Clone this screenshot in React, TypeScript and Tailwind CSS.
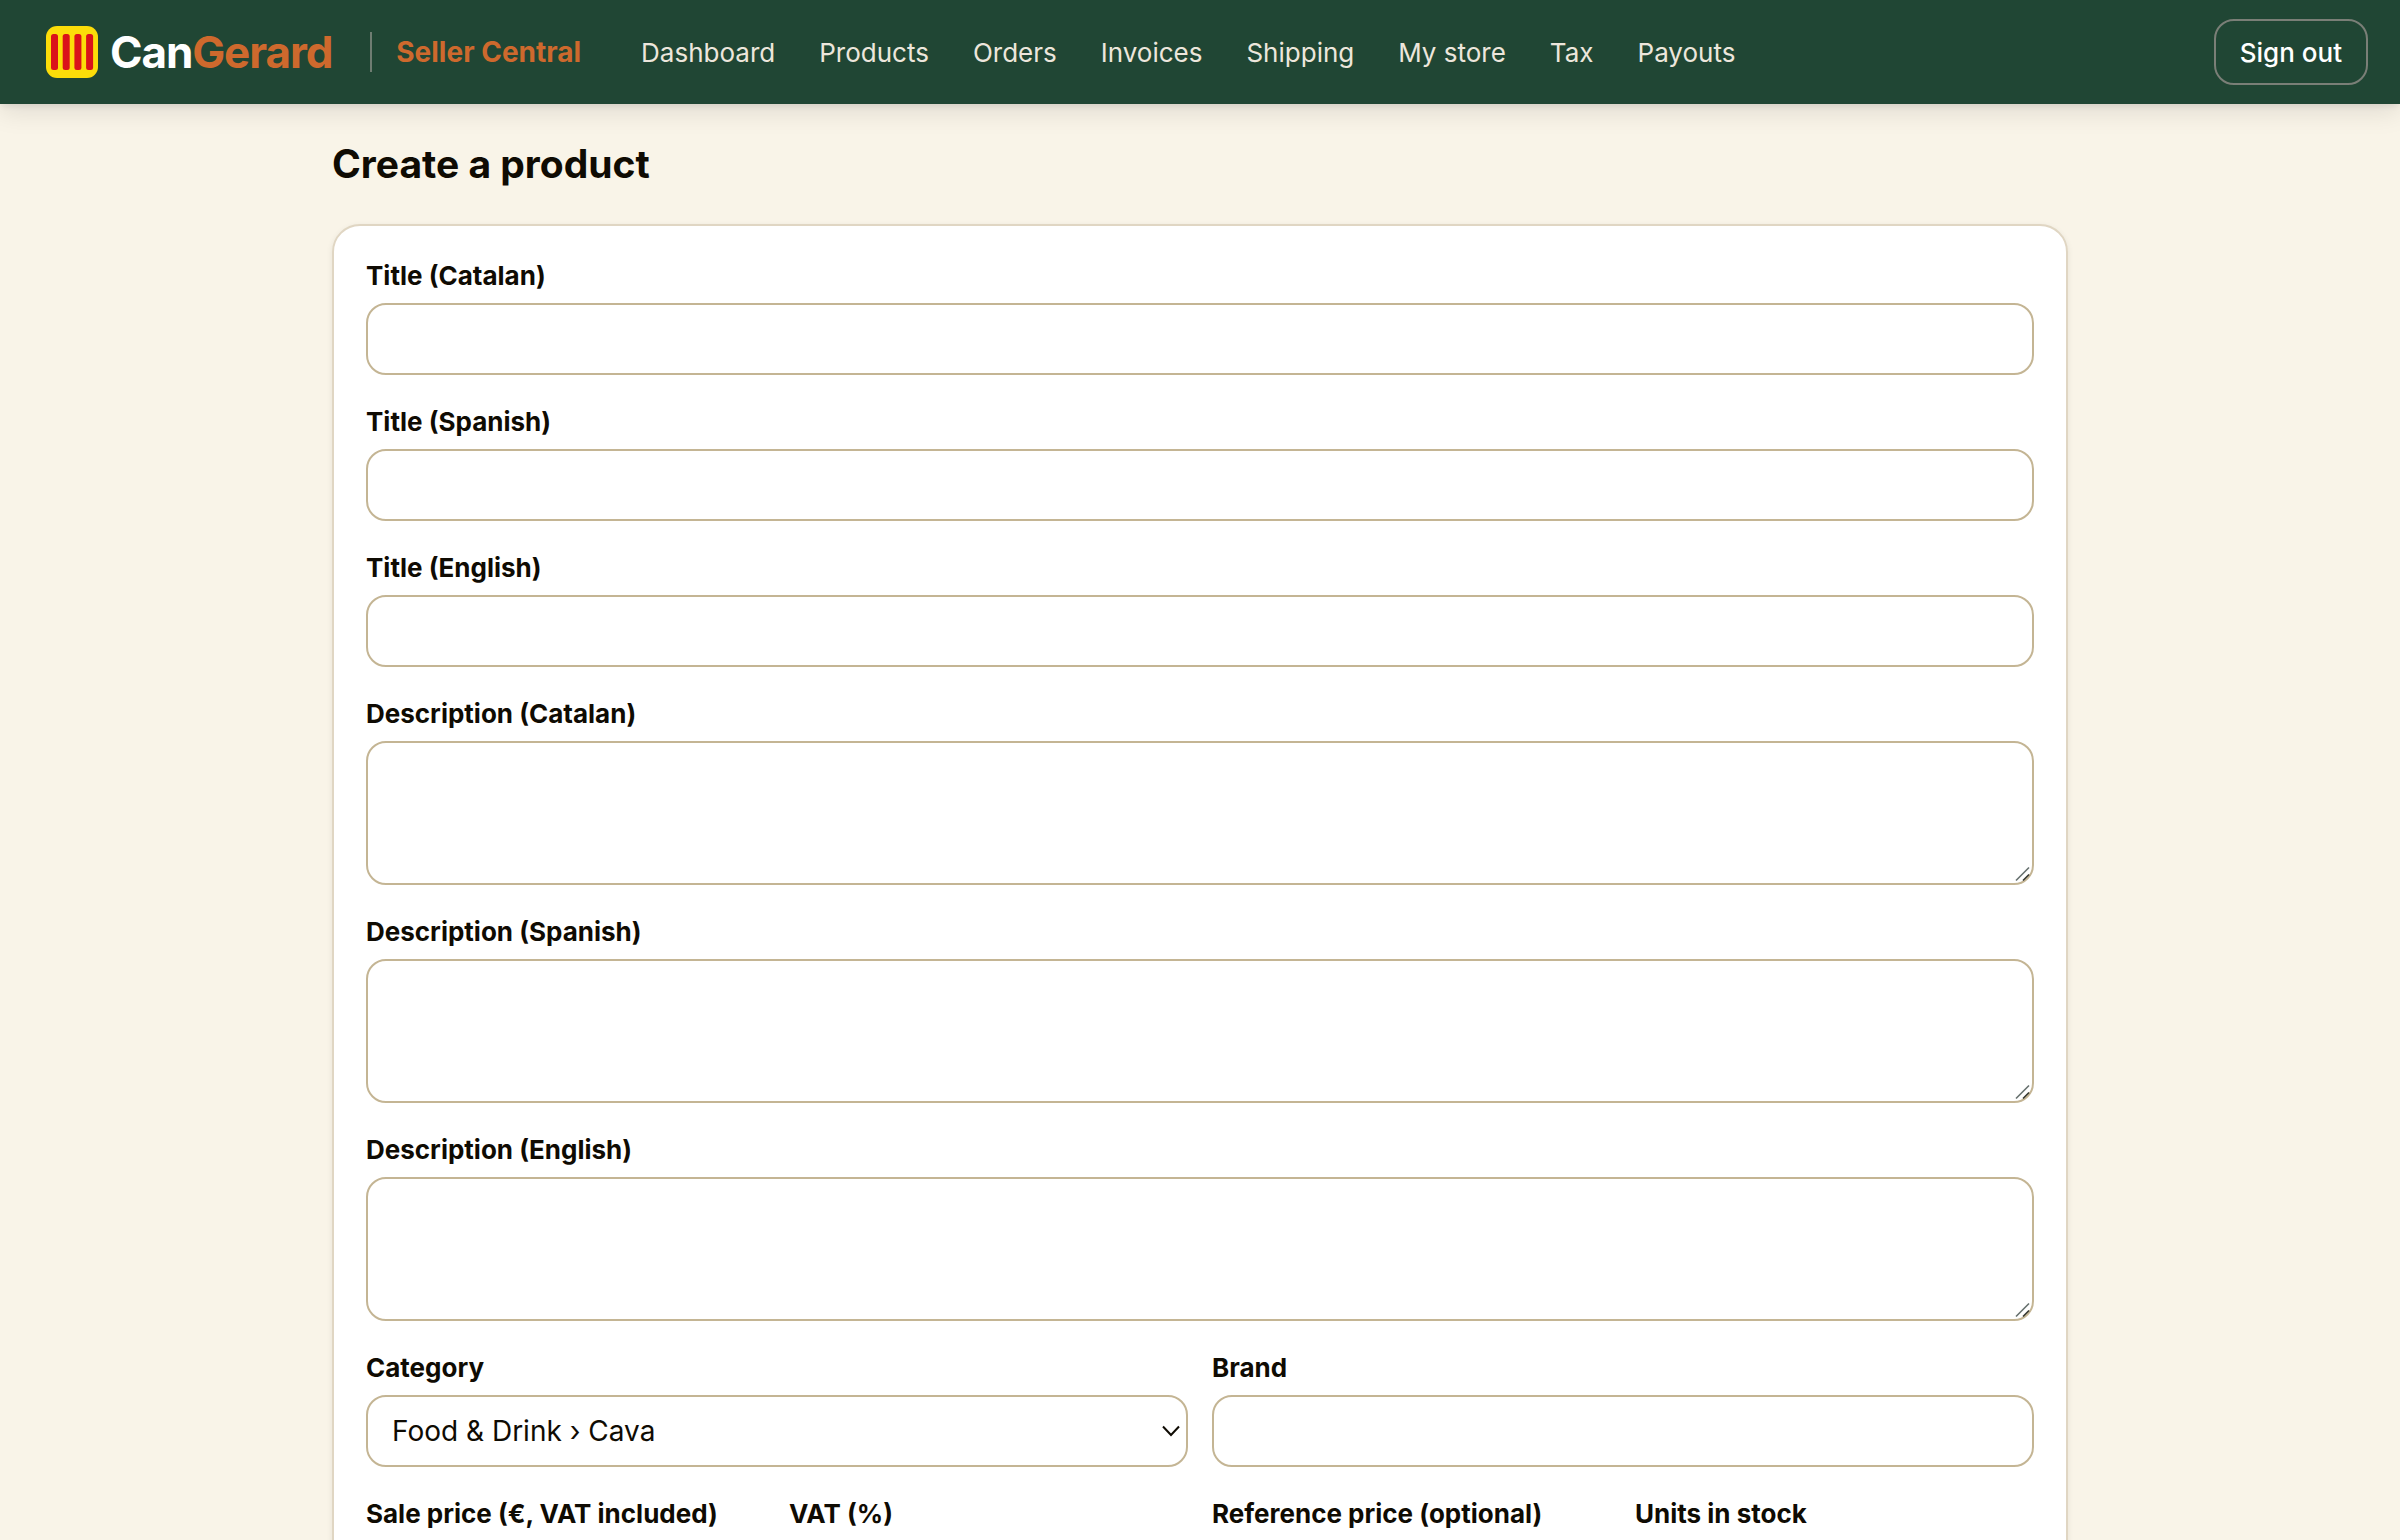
import type { ReactNode } from 'react'

const navLinks = ['Dashboard', 'Products', 'Orders', 'Invoices', 'Shipping', 'My store', 'Tax', 'Payouts']

const inputClass = 'h-[72px] w-full rounded-[20px] border-2 border-[#c4b594] bg-white px-6 text-[28px] outline-none'

const Logo = () => (
  <svg width="52" height="52" viewBox="0 0 52 52" aria-hidden="true">
    <rect width="52" height="52" rx="11" fill="#fcdd09" />
    <rect x="5" y="8" width="7" height="36" rx="2.5" fill="#da121a" />
    <rect x="16.7" y="8" width="7" height="36" rx="2.5" fill="#da121a" />
    <rect x="28.4" y="8" width="7" height="36" rx="2.5" fill="#da121a" />
    <rect x="40.1" y="8" width="7" height="36" rx="2.5" fill="#da121a" />
  </svg>
)

const Navbar = () => (
  <header className="relative flex h-[104px] items-center bg-[#204634] px-8 shadow-[0_4px_6px_-2px_rgb(0_0_0/0.08),0_8px_24px_0_rgb(0_0_0/0.1)]">
    <a href="#" className="ml-3.5 flex items-center gap-3 text-[44px] leading-[52px] font-bold tracking-tight text-white">
      <Logo />
      <span>Can<span className="text-[#ce692d]">Gerard</span></span>
    </a>
    <div className="ml-[38px] flex h-10 items-center border-l-2 border-[#6f7d72] pl-6">
      <span className="text-[28px] font-bold text-[#ce692d]">Seller Central</span>
    </div>
    <nav className="ml-[60px] flex items-center gap-11 text-[26px] text-[#ede6dc]">
      {navLinks.map((link) => (
        <a key={link} href="#" className="whitespace-nowrap">{link}</a>
      ))}
    </nav>
    <button type="button" className="ml-auto h-[66px] rounded-[20px] border-2 border-[#7a7f77] px-6 text-[26px] font-medium whitespace-nowrap text-white">
      Sign out
    </button>
  </header>
)

type FieldProps = { id: string; label: string; children: ReactNode }

const Field = ({ id, label, children }: FieldProps) => (
  <div className="flex min-w-0 flex-col gap-2">
    <label htmlFor={id} className="text-[26px] leading-[38px] font-bold whitespace-nowrap">{label}</label>
    {children}
  </div>
)

const TextField = ({ id, label }: { id: string; label: string }) => (
  <Field id={id} label={label}>
    <input id={id} type="text" className={inputClass} />
  </Field>
)

const TextAreaField = ({ id, label }: { id: string; label: string }) => (
  <Field id={id} label={label}>
    <div className="relative flex">
      <textarea id={id} className="h-36 w-full resize-none rounded-[20px] border-2 border-[#c4b594] bg-white px-6 py-4 text-[28px] outline-none" />
      {/* resize grip */}
      <svg className="pointer-events-none absolute right-0.5 bottom-0.5" width="18" height="18" viewBox="0 0 18 18" fill="none" strokeWidth="1.6">
        <path d="M2 15.5 15 2.5" stroke="#66706d" />
        <path d="M9 15.5 15 9.5" stroke="#33352e" />
      </svg>
    </div>
  </Field>
)

const App = () => {
  return (
    <div className="min-h-screen bg-[#f9f4e8] font-[Inter,sans-serif] text-[#0f0b03]">
      <Navbar />
      <main className="mx-auto max-w-[1800px] px-8 pt-8 pb-16">
        <h1 className="text-[39px] leading-[56px] font-bold">Create a product</h1>
        <form className="mt-8 flex flex-col gap-7 rounded-[28px] border-2 border-[#e0d6c3] bg-white px-8 pt-[31px] pb-8 shadow-[0_2px_6px_rgb(0_0_0/0.08)]">
          <TextField id="title-ca" label="Title (Catalan)" />
          <TextField id="title-es" label="Title (Spanish)" />
          <TextField id="title-en" label="Title (English)" />
          <TextAreaField id="desc-ca" label="Description (Catalan)" />
          <TextAreaField id="desc-es" label="Description (Spanish)" />
          <TextAreaField id="desc-en" label="Description (English)" />
          <div className="grid grid-cols-2 gap-6">
            <Field id="category" label="Category">
              <div className="relative flex">
                <select id="category" className={`${inputClass} appearance-none`}>
                  <option>Food &amp; Drink › Cava</option>
                </select>
                <svg className="pointer-events-none absolute top-[30px] right-2" width="18" height="12" viewBox="0 0 18 12" fill="none" stroke="#0f0b03" strokeWidth="2">
                  <path d="M1 1.5 9 10 17 1.5" />
                </svg>
              </div>
            </Field>
            <TextField id="brand" label="Brand" />
          </div>
          <div className="grid grid-cols-4 gap-6">
            <TextField id="price" label="Sale price (€, VAT included)" />
            <TextField id="vat" label="VAT (%)" />
            <TextField id="reference-price" label="Reference price (optional)" />
            <TextField id="stock" label="Units in stock" />
          </div>
        </form>
      </main>
    </div>
  )
}

export default App
